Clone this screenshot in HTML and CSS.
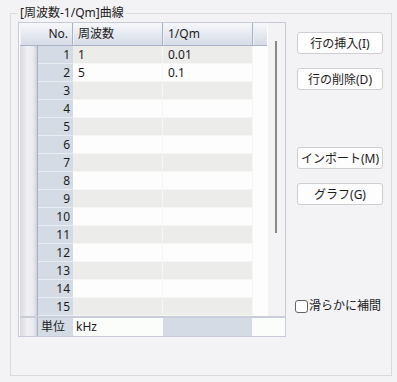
FILE: index.html
```html
<!DOCTYPE html>
<html lang="ja">
<head>
    <meta charset="UTF-8">
    <title>周波数-1/Qm曲線</title>
    <link rel="stylesheet" href="styles.css">
</head>
<body>
<fieldset class="group">
    <legend>[周波数-1/Qm]曲線</legend>
    <div class="layout">
        <div class="grid">
            <div class="grid-body">
                <div class="grid-main">
                    <div class="grid-head">
                        <div class="hcell hcell-no">No.</div>
                        <div class="hcell">周波数</div>
                        <div class="hcell">1/Qm</div>
                        <div class="hcell hcell-fill"></div>
                    </div>
                    <div class="grid-row odd"><div class="sel"></div><div class="num">1</div><div class="cell">1</div><div class="cell">0.01</div><div class="cell-fill"></div></div>
                    <div class="grid-row"><div class="sel"></div><div class="num">2</div><div class="cell">5</div><div class="cell">0.1</div><div class="cell-fill"></div></div>
                    <div class="grid-row odd"><div class="sel"></div><div class="num">3</div><div class="cell"></div><div class="cell"></div><div class="cell-fill"></div></div>
                    <div class="grid-row"><div class="sel"></div><div class="num">4</div><div class="cell"></div><div class="cell"></div><div class="cell-fill"></div></div>
                    <div class="grid-row odd"><div class="sel"></div><div class="num">5</div><div class="cell"></div><div class="cell"></div><div class="cell-fill"></div></div>
                    <div class="grid-row"><div class="sel"></div><div class="num">6</div><div class="cell"></div><div class="cell"></div><div class="cell-fill"></div></div>
                    <div class="grid-row odd"><div class="sel"></div><div class="num">7</div><div class="cell"></div><div class="cell"></div><div class="cell-fill"></div></div>
                    <div class="grid-row"><div class="sel"></div><div class="num">8</div><div class="cell"></div><div class="cell"></div><div class="cell-fill"></div></div>
                    <div class="grid-row odd"><div class="sel"></div><div class="num">9</div><div class="cell"></div><div class="cell"></div><div class="cell-fill"></div></div>
                    <div class="grid-row"><div class="sel"></div><div class="num">10</div><div class="cell"></div><div class="cell"></div><div class="cell-fill"></div></div>
                    <div class="grid-row odd"><div class="sel"></div><div class="num">11</div><div class="cell"></div><div class="cell"></div><div class="cell-fill"></div></div>
                    <div class="grid-row"><div class="sel"></div><div class="num">12</div><div class="cell"></div><div class="cell"></div><div class="cell-fill"></div></div>
                    <div class="grid-row odd"><div class="sel"></div><div class="num">13</div><div class="cell"></div><div class="cell"></div><div class="cell-fill"></div></div>
                    <div class="grid-row"><div class="sel"></div><div class="num">14</div><div class="cell"></div><div class="cell"></div><div class="cell-fill"></div></div>
                    <div class="grid-row odd"><div class="sel"></div><div class="num">15</div><div class="cell"></div><div class="cell"></div><div class="cell-fill"></div></div>
                </div>
                <div class="vscroll"><div class="thumb"></div></div>
            </div>
            <div class="grid-foot">
                <div class="sel"></div>
                <div class="foot-label">単位</div>
                <div class="foot-val">kHz</div>
                <div class="foot-gray"></div>
            </div>
        </div>

        <div class="side">
            <button type="button" class="btn">行の挿入(I)</button>
            <button type="button" class="btn btn-second">行の削除(D)</button>
            <button type="button" class="btn btn-import">インポート(M)</button>
            <button type="button" class="btn btn-second">グラフ(G)</button>
            <label class="check"><input type="checkbox">滑らかに補間</label>
        </div>
    </div>
</fieldset>
</body>
</html>
```

FILE: styles.css
```css
body {
    margin: 0;
    background-color: #f3f2f5;
    font-family: "Noto Sans", "Noto Sans CJK JP", sans-serif;
    font-size: 12px;
    color: #1b1b1b;
}

*,
*::before,
*::after {
    box-sizing: border-box;
}

.group {
    margin: 5px 0 0 10px;
    width: 382px;
    border: 1px solid #dadadd;
    padding: 1px 0 38px 7px;
}

.group legend {
    padding: 0 2px;
    line-height: 16px;
}

.layout {
    display: flex;
    align-items: flex-start;
}

/* data grid */
.grid {
    width: 268px;
    border: 1px solid #c8cad8;
    padding-left: 1px;
    background-color: #fbfdfb;
}

.grid-body {
    display: flex;
}

.grid-main {
    width: 247px;
}

.grid-head {
    display: flex;
    height: 23px;
}

.hcell {
    width: 90px;
    line-height: 22px;
    padding-left: 5px;
    background: linear-gradient(#f7f8fb, #d6dbe6);
    border-right: 1px solid #a6b2c6;
    border-bottom: 1px solid #a9b4c8;
    box-shadow: inset 1px 0 #eef1f6;
}

.hcell-no {
    width: 53px;
    text-align: right;
    padding: 0 4px 0 0;
}

.hcell-fill {
    width: 14px;
    border-right: none;
}

.grid-row {
    display: flex;
    height: 18px;
    line-height: 17px;
    background-color: #fcfdfc;
}

.sel {
    width: 18px;
    background: linear-gradient(to right, #d9dae1, #f2f2f5 45%, #e8e9ee 80%, #cdd0d9);
    border-right: 1px solid #a9b1c1;
}

.num {
    width: 35px;
    text-align: right;
    padding-right: 3px;
    background-color: #d4dbe5;
    border-bottom: 1px solid #e9edf2;
}

.cell {
    width: 90px;
    padding-left: 5px;
    border-right: 1px solid #f5f6f4;
    border-bottom: 1px solid #f5f6f4;
}

.odd .cell {
    background-color: #ecedea;
}

.cell-fill {
    width: 14px;
}

.vscroll {
    width: 17px;
    margin-left: 1px;
    background-color: #f3f2f5;
}

.thumb {
    width: 2px;
    height: 192px;
    margin: 18px 0 0 7px;
    background-color: #888888;
}

.grid-foot {
    display: flex;
    height: 20px;
    line-height: 17px;
    border-top: 2px solid #c9ccd9;
}

.foot-label {
    width: 35px;
    padding-left: 3px;
    background-color: #d4dbe5;
}

.foot-val {
    width: 90px;
    padding-left: 3px;
}

.foot-gray {
    width: 89px;
    background-color: #d4dbe5;
}

/* right column */
.side {
    display: flex;
    flex-direction: column;
    margin-left: 11px;
    padding-top: 10px;
}

.btn {
    width: 86px;
    height: 22px;
    padding: 0;
    background-color: #fdfdfd;
    border: 1px solid #cfcfd2;
    border-radius: 3px;
    font-family: inherit;
    font-size: 12px;
    color: #1b1b1b;
}

.btn-second {
    margin-top: 14px;
}

.btn-import {
    margin-top: 57px;
}

.check {
    display: flex;
    align-items: center;
    margin: 94px 0 0 -2px;
    line-height: 14px;
}

.check input {
    appearance: none;
    width: 13px;
    height: 13px;
    margin: 0 1px 0 0;
    border: 1px solid #626262;
    border-radius: 3px;
    background-color: #ffffff;
}
```
